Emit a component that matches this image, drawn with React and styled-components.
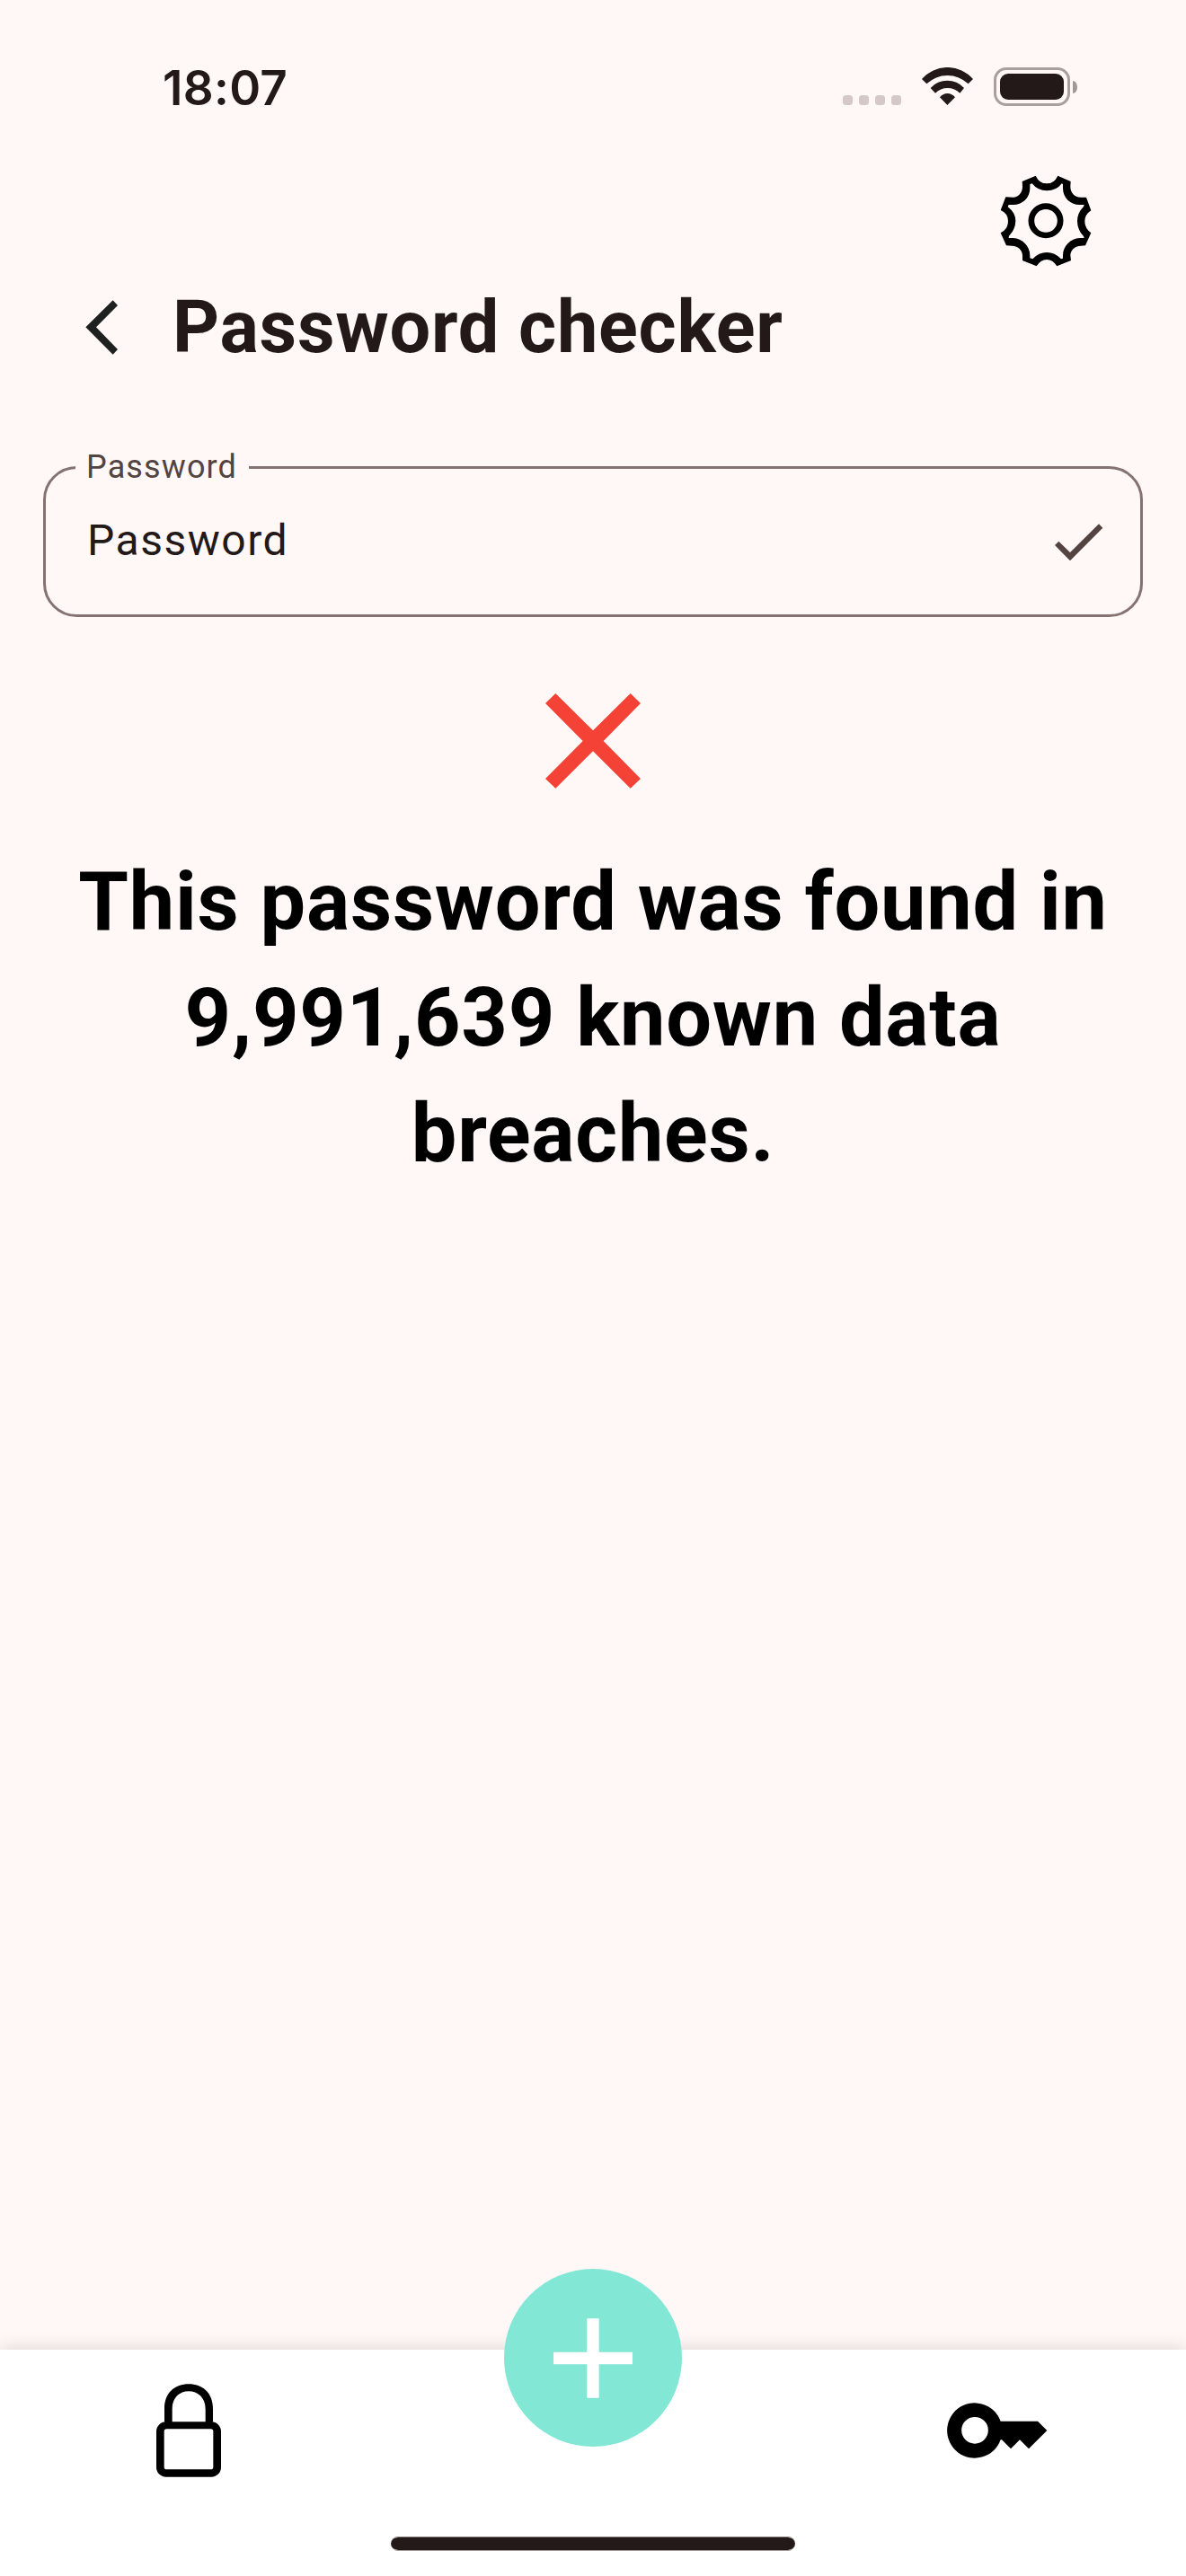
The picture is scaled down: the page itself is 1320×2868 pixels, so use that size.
import React from 'react';
import styled, { createGlobalStyle } from 'styled-components';

const GlobalStyle = createGlobalStyle`
  * { box-sizing: border-box; }
  body { margin: 0; background: #fff8f7; }
`;

const Screen = styled.div`
  display: flex;
  flex-direction: column;
  width: 1320px;
  height: 2868px;
  overflow: hidden;
  background: #fff8f7;
  color: #231918;
  font-family: Roboto, "Liberation Sans", sans-serif;
`;

const Icon = styled.svg`
  display: block;
  flex: none;
  width: ${(p) => p.$w}px;
  height: ${(p) => p.$h}px;
  fill: ${(p) => p.$color || '#000'};
`;

const StatusBar = styled.header`
  display: flex;
  align-items: flex-start;
  justify-content: space-between;
  height: 192px;
  padding: 75px 121px 0 181px;
`;

const Clock = styled.time`
  margin-top: -9px;
  font: 600 53px/64px Inter, "Liberation Sans", sans-serif;
  letter-spacing: 0.3px;
`;

const StatusIcons = styled.div`
  display: flex;
  align-items: flex-start;
`;

const SignalDots = styled.div`
  display: flex;
  gap: 7px;
  margin: 31px 23px 0 0;
`;

const Dot = styled.span`
  width: 11px;
  height: 11px;
  border-radius: 3.5px;
  background: #d4c9c8;
`;

const Wifi = styled(Icon)`
  margin-right: 23px;
`;

const Battery = styled.div`
  display: flex;
  align-items: center;
  gap: 3px;
  height: 43px;
`;

const BatteryShell = styled.div`
  width: 85px;
  height: 43px;
  padding: 4px;
  border: 3px solid #a99f9e;
  border-radius: 14px;
`;

const BatteryLevel = styled.div`
  height: 29px;
  border-radius: 9px;
  background: #231918;
`;

const BatteryTip = styled.div`
  width: 5px;
  height: 14px;
  border-radius: 0 5px 5px 0 / 0 7px 7px 0;
  background: #a09796;
`;

const Toolbar = styled.div`
  display: flex;
  justify-content: flex-end;
  height: 116px;
  padding-right: 102px;
`;

const TitleRow = styled.div`
  display: flex;
  align-items: center;
  height: 113px;
  padding-left: 95px;
`;

const Title = styled.h1`
  margin: 1px 0 0 60px;
  font-size: 81px;
  line-height: 112px;
  font-weight: 700;
  letter-spacing: 0.75px;
`;

const Field = styled.fieldset`
  height: 181px;
  margin: 85px 48px 0;
  padding: 0;
  border: 3px solid #857371;
  border-radius: 37.5px;
`;

const FieldLabel = styled.legend`
  height: 29px;
  margin-left: 33px;
  padding: 0 13px 0 12px;
  color: #534341;
  font-size: 36px;
  line-height: 28px;
  letter-spacing: 1.125px;
`;

const FieldBody = styled.div`
  display: flex;
  align-items: center;
  justify-content: space-between;
  height: 134px;
  padding: 0 41px 0 46px;
`;

const FieldValue = styled.span`
  font-size: 48px;
  line-height: 72px;
  letter-spacing: 1.5px;
`;

const CheckIcon = styled(Icon)`
  margin-top: 3px;
`;

const Result = styled.main`
  display: flex;
  flex: 1;
  flex-direction: column;
  align-items: center;
  padding-top: 85px;
`;

const Message = styled.p`
  width: 1200px;
  margin: 62px 0 0;
  color: #000;
  font-size: 90px;
  line-height: 129px;
  font-weight: 700;
  letter-spacing: 0.75px;
  text-align: center;
`;

const BottomNav = styled.nav`
  position: relative;
  display: flex;
  flex-direction: column;
  align-items: center;
  height: 252px;
  background: #fff;
  box-shadow: 0 0 20px rgba(0, 0, 0, 0.16);
`;

const NavItems = styled.div`
  display: flex;
  justify-content: space-between;
  align-items: center;
  align-self: stretch;
  height: 180px;
  padding: 0 154px 0 174px;
`;

const AddButton = styled.button`
  position: absolute;
  top: -90px;
  left: 561px;
  display: flex;
  align-items: center;
  justify-content: center;
  width: 198px;
  height: 198px;
  padding: 0;
  border: 0;
  border-radius: 50%;
  background: #82e7d4;
`;

const HomeIndicator = styled.div`
  width: 450px;
  height: 16px;
  margin-top: 28px;
  border: solid #918b8b;
  border-width: 1px 0;
  border-radius: 8px;
  background: #231918;
  background-clip: padding-box;
`;

export default function App() {
  return (
    <Screen>
      <GlobalStyle />
      <StatusBar>
        <Clock>18:07</Clock>
        <StatusIcons>
          <SignalDots>
            <Dot />
            <Dot />
            <Dot />
            <Dot />
          </SignalDots>
          <Wifi $w={57} $h={42} $color="#231918" viewBox="375 75 171 126">
            <path d="M375 114A113 113 0 0 1 546 114L530 130A100 100 0 0 0 391 130ZM404 144A75 75 0 0 1 516 144L502 161A58 58 0 0 0 420 161ZM435 175A31.5 31.5 0 0 1 486 175L460 201Z" />
          </Wifi>
          <Battery>
            <BatteryShell>
              <BatteryLevel />
            </BatteryShell>
            <BatteryTip />
          </Battery>
        </StatusIcons>
      </StatusBar>
      <Toolbar>
        <Icon $w={108} $h={108} viewBox="630 425 324 324">
          <path
            fillRule="evenodd"
            d="M713 455L758 436Q770 462 795 462Q820 462 832 436L875 455L874 472C874 492 888 508 908 508L927 508L943 552Q922 566 922 588Q922 612 943 627L924 669L909 670C888 670 874 686 874 702L876 719L829 738Q815 716 795 716Q775 716 761 738L714 719V702C714 686 700 670 679 670L660 669L641 627Q666 614 666 587Q666 562 641 551L658 507L683 508C700 508 714 492 714 472Z
            M746 462Q765 486 795 486Q828 486 845 462L849 464V478C849 510 875 533 905 533L920 533L918 539Q897 560 897 588Q897 617 918 638L920 644H905C875 646 849 670 849 702V712L843 714Q822 692 795 692Q768 692 748 714L739 711V702C739 670 713 646 683 644H668L669 637Q691 615 691 587Q691 560 665 540L668 533L683 533C713 533 739 510 739 478V464Z
            M792 528A58.5 58.5 0 1 0 792 645A58.5 58.5 0 1 0 792 528ZM792 548A38.5 38.5 0 1 1 792 625A38.5 38.5 0 1 1 792 548Z"
          />
        </Icon>
      </Toolbar>
      <TitleRow>
        <Icon $w={37} $h={61} $color="#1f2121" viewBox="106 852 111 183">
          <path d="M107 943L198 853L214 870L142 943L214 1017L198 1034Z" />
        </Icon>
        <Title>Password checker</Title>
      </TitleRow>
      <Field>
        <FieldLabel>Password</FieldLabel>
        <FieldBody>
          <FieldValue>Password</FieldValue>
          <CheckIcon $w={54} $h={42} $color="#534341" viewBox="222 278 162 126">
            <path d="M222 350L235 337L273 374L369 279L382 292L273 402Z" />
          </CheckIcon>
        </FieldBody>
      </Field>
      <Result>
        <Icon $w={106} $h={106} $color="#f44336" viewBox="81 95 318 318">
          <path d="M81 128L115 95L240 219L365 95L399 128L275 254L399 380L365 412L240 288L115 412L81 380L206 254Z" />
        </Icon>
        <Message>This password was found in 9,991,639 known data breaches.</Message>
      </Result>
      <BottomNav>
        <NavItems>
          <Icon $w={72} $h={104} viewBox="102 191 216 312">
            <path
              fillRule="evenodd"
              d="M129 318V275C129 220 165 192 210 192S291 220 291 275V318H266V275C266 237 240 216 210 216S155 237 155 275V318ZM134 318H286A32 32 0 0 1 318 350V470A32 32 0 0 1 286 502H134A32 32 0 0 1 102 470V350A32 32 0 0 1 134 318ZM136 342A8 8 0 0 0 128 350V469A8 8 0 0 0 136 477H284A8 8 0 0 0 292 469V350A8 8 0 0 0 284 342Z"
            />
          </Icon>
          <Icon $w={112} $h={62} viewBox="102 224 336 186">
            <path
              fillRule="evenodd"
              d="M281 286H405L436 317L375 378L345 348L315 378L285 348H281A92 92 0 1 1 281 286ZM195 272A44.5 44.5 0 1 0 195 361A44.5 44.5 0 1 0 195 272Z"
            />
          </Icon>
        </NavItems>
        <HomeIndicator />
        <AddButton aria-label="Add">
          <Icon $w={88} $h={89} $color="#fff" viewBox="228 240.5 264 267">
            <path d="M340 241H380V354H492V394H380V507H340V394H228V354H340Z" />
          </Icon>
        </AddButton>
      </BottomNav>
    </Screen>
  );
}
